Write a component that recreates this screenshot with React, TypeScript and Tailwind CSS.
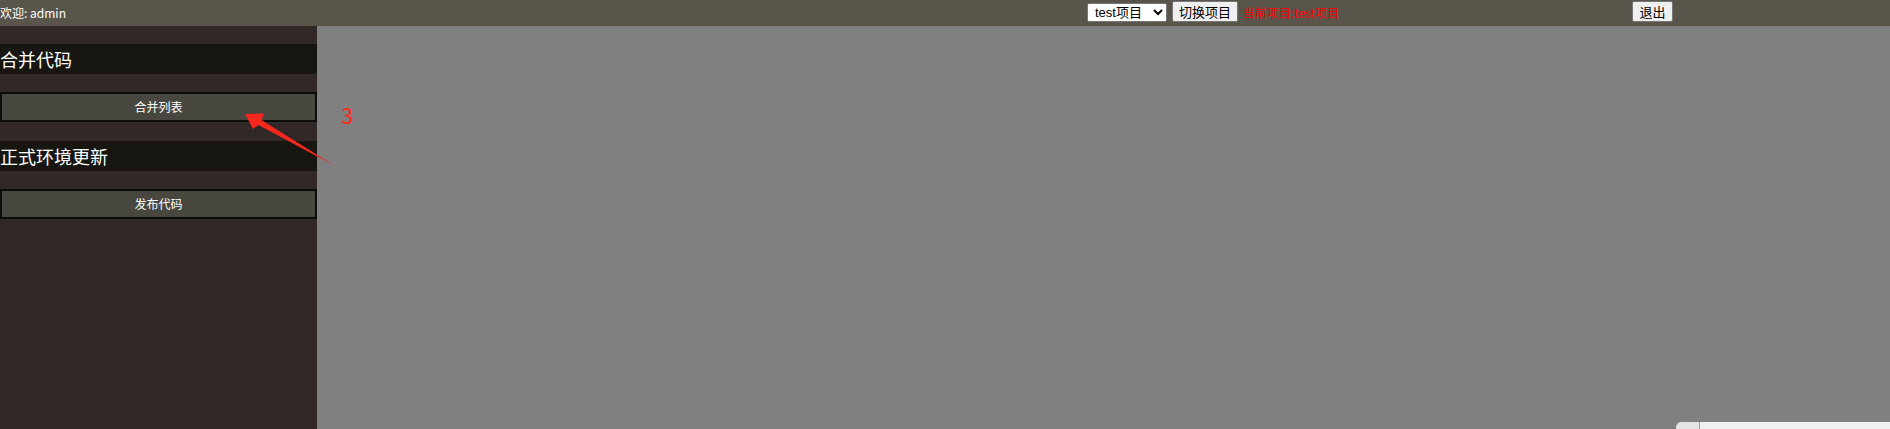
import React from "react";

const font = { fontFamily: '"Noto Sans CJK SC", "Noto Sans", sans-serif' };

function SideButton({ label }: { label: string }) {
  return (
    <button
      type="button"
      className="w-full h-[30px] border-2 border-[#0c0c0a] bg-[#48473f] text-[12px] text-white leading-none"
    >
      {label}
    </button>
  );
}

function SideHeader({ title }: { title: string }) {
  return (
    <div className="h-[30px] bg-[#171611] flex items-center text-[18px] text-white leading-none">
      {title}
    </div>
  );
}

export default function App() {
  return (
    <div className="relative w-[1890px] h-[429px] overflow-hidden flex flex-col" style={font}>
      <div className="h-[26px] bg-[#59554a] flex items-center text-white shrink-0">
        <div className="w-[1087px] text-[12px] leading-none">欢迎: admin</div>
        <div className="w-[545px] flex items-center">
          <select
            className="w-[80px] h-[19px] mt-[-2px] bg-white text-black text-[13px] leading-[17px] border border-[#767676] rounded-[2px] pl-[3px]"
            style={{ fontFamily: '"Liberation Sans", "Noto Sans CJK SC", sans-serif' }}
          >
            <option>test项目</option>
          </select>
          <button
            type="button"
            className="ml-[5px] h-[21px] px-[6px] mt-[-3px] bg-[#efefef] text-black text-[13px] leading-none border border-[#767676] rounded-[2px]"
          >
            切换项目
          </button>
          <span className="ml-[5px] text-[12px] text-[#ff0000] leading-none">当前项目:test项目</span>
        </div>
        <button
          type="button"
          className="h-[21px] w-[41px] mt-[-4px] bg-[#efefef] text-black text-[13px] leading-none border border-[#767676] rounded-[2px]"
        >
          退出
        </button>
      </div>

      <div className="flex flex-1">
        <div className="w-[317px] bg-[#312827] pt-[18px] flex flex-col">
          <SideHeader title="合并代码" />
          <div className="mt-[18px]">
            <SideButton label="合并列表" />
          </div>
          <div className="mt-[19px]">
            <SideHeader title="正式环境更新" />
          </div>
          <div className="mt-[18px]">
            <SideButton label="发布代码" />
          </div>
        </div>
        <div className="flex-1 bg-[#808080]" />
      </div>

      <svg className="absolute left-0 top-0 pointer-events-none" width="400" height="200">
        <polygon
          points="245,114 264,113.5 261.5,120 335,166 258.5,125 253,129"
          fill="#f5281e"
        />
      </svg>
      <div className="absolute left-[341px] top-[103px] text-[22px] text-[#ff2a1e] leading-none">3</div>

      <div className="absolute left-[1676px] top-[422px] w-[214px] h-[10px] bg-[#f0f0f0] rounded-tl-[6px] flex">
        <div className="w-[24px] h-full bg-[#e4e4e4] rounded-tl-[6px] border-r border-[#a0a0a0]" />
      </div>
    </div>
  );
}
